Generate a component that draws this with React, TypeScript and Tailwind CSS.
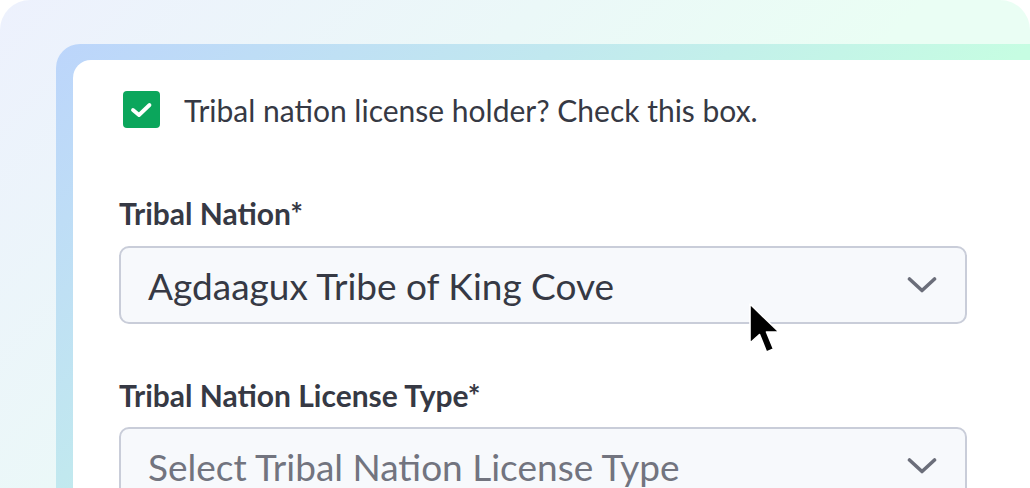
import React from "react";

function Chevron() {
  return (
    <svg width="30" height="18" viewBox="0 0 30 18" fill="none">
      <path d="M2.5 3 L15 14.5 L27.5 3" stroke="#6b6e7a" strokeWidth="3.6" strokeLinecap="round" strokeLinejoin="round" />
    </svg>
  );
}

function Cursor() {
  return (
    <svg width="36" height="56" viewBox="-2 -2 36 56" className="absolute left-[748px] top-[302px]">
      <path d="M0 0 L0 39 L9.5 30.5 L16.5 48 L23.5 45 L16.5 28 L29 28 Z" fill="#000" stroke="#fff" strokeWidth="1.6" strokeLinejoin="round" />
    </svg>
  );
}

function Select({ text, placeholder }: { text: string; placeholder?: boolean }) {
  return (
    <div className="w-[848px] h-[78px] rounded-[10px] border-2 border-[#c9cdd9] bg-[#f7f9fc] flex items-center justify-between pl-[27px] pr-[28px]">
      <span className={`text-[37px] leading-none ${placeholder ? "text-[#72747f]" : "text-[#363944]"}`}>{text}</span>
      <Chevron />
    </div>
  );
}

export default function App() {
  return (
    <div className="w-[1030px] h-[488px] overflow-hidden bg-white relative" style={{ fontFamily: "Lato, 'Open Sans', sans-serif" }}>
      <div className="w-[1030px] h-[520px] rounded-[30px] bg-[linear-gradient(135deg,#edf1fd_0%,#ebf8f8_35%,#eafef4_60%)] pl-[56px] pt-[44px]">
        <div className="w-[1000px] h-[500px] rounded-tl-[24px] bg-[linear-gradient(139deg,#bcd5fb_0%,#c1e8ef_32%,#c6fde2_62%)] pl-[17px] pt-[16px]">
          <div className="w-[990px] h-[500px] rounded-tl-[18px] bg-white pl-[46px] pt-[31px]">
            <div className="flex items-center gap-[24px] ml-[4px]">
              <div className="w-[37px] h-[37px] rounded-[4px] bg-[#0ba65c]">
                <svg width="37" height="37" viewBox="0 0 37 37" fill="none">
                  <path d="M10 19 L16 24 L26.5 14" stroke="#fff" strokeWidth="3.8" strokeLinecap="round" strokeLinejoin="round" />
                </svg>
              </div>
              <span className="text-[30px] text-[#363944] leading-none">Tribal nation license holder? Check this box.</span>
            </div>
            <div className="mt-[70px] text-[30px] font-bold text-[#363944] leading-none">Tribal Nation*</div>
            <div className="mt-[18px]">
              <Select text="Agdaagux Tribe of King Cove" />
            </div>
            <div className="mt-[56px] text-[30px] font-bold text-[#363944] leading-none">Tribal Nation License Type*</div>
            <div className="mt-[17px]">
              <Select text="Select Tribal Nation License Type" placeholder />
            </div>
          </div>
        </div>
      </div>
      <Cursor />
    </div>
  );
}
